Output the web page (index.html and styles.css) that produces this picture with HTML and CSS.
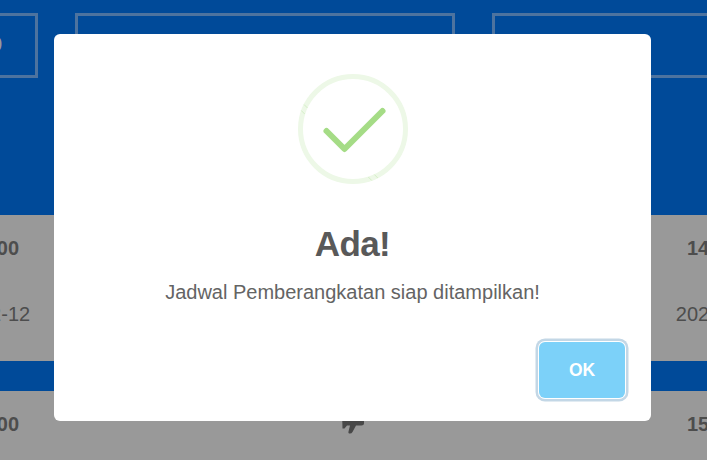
FILE: index.html
```
<!DOCTYPE html>
<html lang="id">
<head>
<meta charset="utf-8">
<title>Jadwal Pemberangkatan</title>
<link rel="stylesheet" href="styles.css">
</head>
<body>
<div class="viewport">
<main class="page">
  <div class="filters">
    <div class="field">0</div>
    <div class="field"></div>
    <div class="field"></div>
  </div>
  <section class="trip">
    <div class="stop"><b>12:00:00</b><span>2022-12-12</span></div>
    <div class="stop"></div>
    <div class="stop"><b>14:00:00</b><span>2022-12-12</span></div>
  </section>
  <section class="trip">
    <div class="stop"><b>13:00:00</b><span>2022-12-12</span></div>
    <div class="stop">
      <svg class="plane" width="24" height="24" viewBox="0 0 24 24"><path d="M2 0H24V13.5Q24 15.5 21.500 15.500H16L12.500 22Q11.500 24 9 23.500Q8 23 8.500 21.500L10 15.500H7L4.500 18.500H2.500Z"/></svg>
    </div>
    <div class="stop"><b>15:00:00</b><span>2022-12-12</span></div>
  </section>
</main>
</div>
<div class="overlay">
  <div class="modal" role="dialog">
    <svg class="success" width="110" height="110" viewBox="0 0 110 110">
      <circle class="ring" cx="55" cy="55" r="52.5"/>
      <path class="tick" d="M28.500 57L46.500 75L84.500 37"/>
      <path class="seam" d="M6 30.500l3.500 3.500M3.200 36.500l3.500 3.500M70.300 103l3.500 3.500M76.300 100.500l3.500 3.500"/>
    </svg>
    <h1 class="title">Ada!</h1>
    <p class="message">Jadwal Pemberangkatan siap ditampilkan!</p>
    <div class="footer"><button class="ok">OK</button></div>
  </div>
</div>
</body>
</html>
```
FILE: styles.css
```
* {
  box-sizing: border-box;
}

body {
  margin: 0;
  height: 460px;
  overflow: hidden;
  background: #004a99;
  color: #4d4d4d;
  font-family: "Liberation Sans", Arial, sans-serif;
}

.viewport {
  width: 100%;
  height: 460px;
  overflow: hidden;
}

.page {
  width: 1256px;
  height: 460px;
  margin-left: -342px;
  padding-top: 13px;
  overflow: hidden;
}

.filters {
  display: grid;
  grid-template-columns: repeat(3, 380px);
  gap: 37px;
  height: 65px;
  margin-bottom: 137px;
}

.field {
  padding: 17px 33px 0 0;
  border: 3px solid #4d739f;
  color: #999;
  font-size: 20px;
  line-height: 22px;
  text-align: right;
}

.trip {
  display: grid;
  grid-template-columns: repeat(3, 374px);
  height: 146px;
  margin-bottom: 30px;
  padding-left: 134px;
  background: #999;
}

.stop {
  display: flex;
  flex-direction: column;
  align-items: center;
  gap: 43px;
  padding-top: 22px;
  font-size: 20px;
  line-height: 23px;
}

.plane {
  margin-top: -3px;
  margin-left: -2px;
  fill: #484848;
}

.overlay {
  position: absolute;
  inset: 0;
  padding: 34px 56px 0 54px;
}

.modal {
  display: flex;
  flex-direction: column;
  align-items: center;
  height: 387px;
  padding-top: 40px;
  border-radius: 6px;
  background: #fff;
}

.success {
  display: block;
  fill: none;
}

.ring {
  stroke: #edf8e7;
  stroke-width: 5;
}

.tick {
  stroke: #a5dc86;
  stroke-width: 6;
  stroke-linecap: round;
  stroke-linejoin: round;
}

.seam {
  stroke: #c9eab7;
  stroke-width: .7;
}

.title {
  margin: 40px 0 0;
  color: #595959;
  font-size: 35px;
  letter-spacing: -.6px;
  line-height: 40px;
}

.message {
  margin: 16px 0 0;
  color: #646464;
  font-size: 20px;
  line-height: 24px;
}

.footer {
  display: flex;
  align-self: stretch;
  justify-content: flex-end;
  margin-top: 38px;
  padding-right: 26px;
}

.ok {
  width: 86px;
  height: 56px;
  padding: 0;
  border: 0;
  border-radius: 6px;
  background: #7cd1f9;
  box-shadow: 0 0 0 1px #fff, 0 0 0 3.5px #c3d7e6;
  color: #fff;
  font: bold 17.5px "Liberation Sans", Arial, sans-serif;
}
```
